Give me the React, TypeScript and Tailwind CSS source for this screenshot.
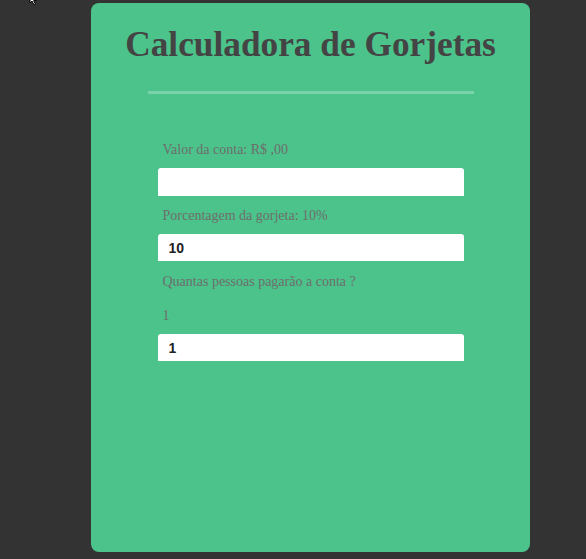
import React, { useState } from 'react'

const App = () => {
  const [bill, setBill] = useState('')
  const [tip, setTip] = useState('10')
  const [people, setPeople] = useState('1')

  return (
    <div className="relative min-h-[559px] w-full bg-[#333333] pt-[3px] pb-[7px]">
      {/* mouse pointer left in the screenshot */}
      <svg className="absolute left-[29px] -top-[6px]" width="10" height="12" viewBox="0 0 10 12">
        <path d="M1 1 L1 9 L3 7 L5 11 L6.5 10.3 L4.6 6.6 L7.5 6.6 Z" fill="#fff" stroke="#000" strokeWidth="1" />
      </svg>

      <div className="ml-[91px] flex h-[549px] w-[439px] flex-col items-center rounded-[8px] bg-[#4bc38a] pt-[21px] font-['Liberation_Serif',serif]">
        {/* Title */}
        <h1 className="text-[35.3px] leading-[41px] font-bold text-[#444444]">Calculadora de Gorjetas</h1>
        <div className="mt-[26px] h-[3px] w-[326px] bg-[#7ad3aa]" />

        {/* Form */}
        <div className="mt-[48px] flex w-[306px] flex-col text-[14px] leading-[16px] text-[#6e6e6e]">
          <label className="pl-[5px]">Valor da conta: R$ {bill ? bill : ''},00</label>
          <input
            className="mt-[10px] h-[28px] w-full rounded-t-[3px] bg-white px-[11px] font-['Liberation_Sans',sans-serif] text-[14px] font-bold text-[#222222] outline-none"
            value={bill}
            onChange={(e) => setBill(e.target.value)}
          />

          <label className="mt-[12px] pl-[5px]">Porcentagem da gorjeta: {tip}%</label>
          <input
            className="mt-[10px] h-[27px] w-full rounded-t-[3px] bg-white px-[11px] font-['Liberation_Sans',sans-serif] text-[14px] font-bold text-[#222222] outline-none"
            value={tip}
            onChange={(e) => setTip(e.target.value)}
          />

          <label className="mt-[13px] pl-[5px]">Quantas pessoas pagarão a conta ?</label>
          <p className="mt-[18px] pl-[5px]">{people}</p>
          <input
            className="mt-[10px] h-[27px] w-full rounded-t-[3px] bg-white px-[11px] font-['Liberation_Sans',sans-serif] text-[14px] font-bold text-[#222222] outline-none"
            value={people}
            onChange={(e) => setPeople(e.target.value)}
          />
        </div>
      </div>
    </div>
  )
}

export default App
